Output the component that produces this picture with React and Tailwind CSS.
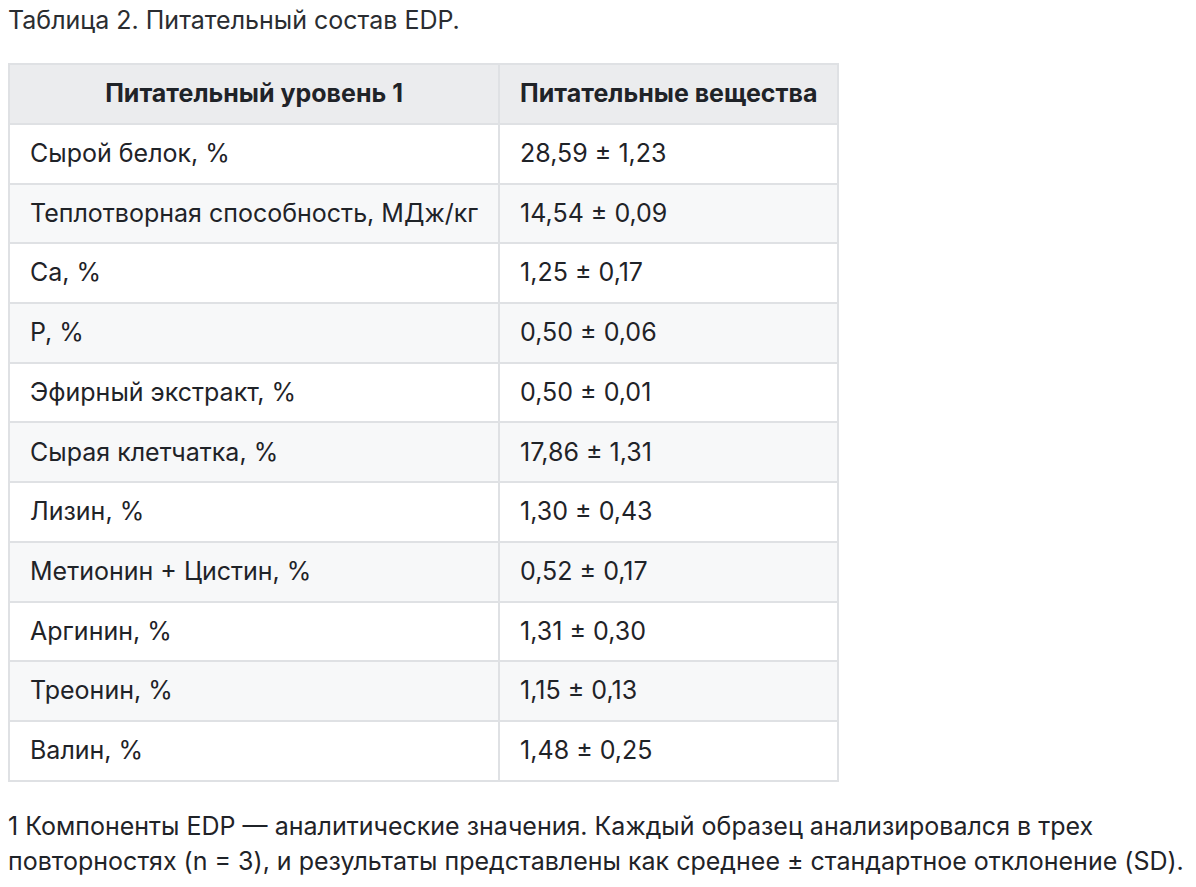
const rows = [
  ['Сырой белок, %', '28,59 ± 1,23'],
  ['Теплотворная способность, МДж/кг', '14,54 ± 0,09'],
  ['Ca, %', '1,25 ± 0,17'],
  ['P, %', '0,50 ± 0,06'],
  ['Эфирный экстракт, %', '0,50 ± 0,01'],
  ['Сырая клетчатка, %', '17,86 ± 1,31'],
  ['Лизин, %', '1,30 ± 0,43'],
  ['Метионин + Цистин, %', '0,52 ± 0,17'],
  ['Аргинин, %', '1,31 ± 0,30'],
  ['Треонин, %', '1,15 ± 0,13'],
  ['Валин, %', '1,48 ± 0,25'],
];

const App = () => {
  return (
    <div className="min-h-screen bg-white px-2 font-['Inter',sans-serif] text-[25px] text-[#1f2328]">
      <p className="pt-[5px] leading-[30px] text-[#2a2d31]">Таблица 2. Питательный состав EDP.</p>

      <table className="mt-[28px] border-collapse border-2 border-[#dfe1e4]">
        <thead>
          <tr className="bg-[#ebecee]">
            <th className="h-[60px] border-2 border-[#dfe1e4] px-5 text-center font-bold">Питательный уровень 1</th>
            <th className="h-[60px] border-2 border-[#dfe1e4] px-5 text-center font-bold">Питательные вещества</th>
          </tr>
        </thead>
        <tbody>
          {rows.map(([name, value], i) => (
            <tr key={name} className={i % 2 === 1 ? 'bg-[#f7f8f9]' : 'bg-white'}>
              <td className="h-[59.7px] border-2 border-[#dfe1e4] px-5">{name}</td>
              <td className="h-[59.7px] border-2 border-[#dfe1e4] px-5">{value}</td>
            </tr>
          ))}
        </tbody>
      </table>

      {/* footnote */}
      <p className="mt-[27px] leading-[35px]">
        1 Компоненты EDP — аналитические значения. Каждый образец анализировался в трех повторностях (n = 3), и результаты представлены как среднее ± стандартное отклонение (SD).
      </p>
    </div>
  );
};

export default App;
